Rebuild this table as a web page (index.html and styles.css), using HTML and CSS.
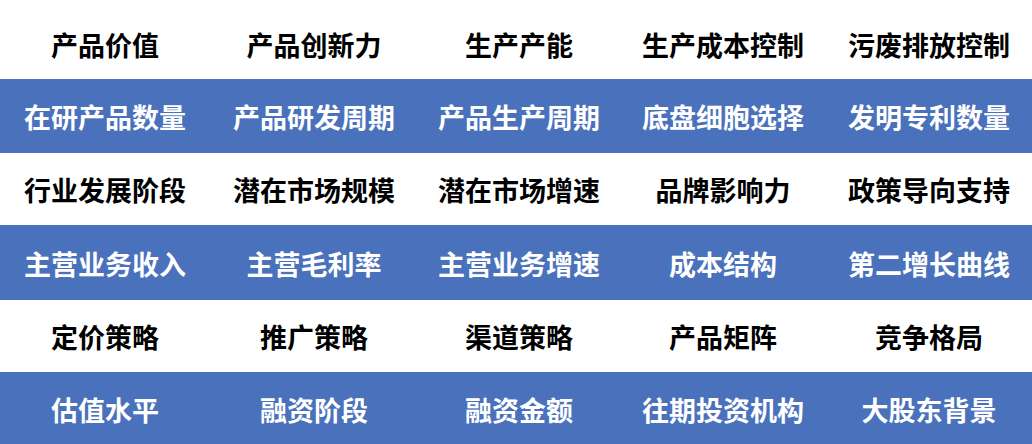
FILE: index.html
```html
<!DOCTYPE html>
<html lang="zh-CN">
<head>
<meta charset="utf-8">
<title>指标矩阵</title>
<link rel="stylesheet" href="styles.css">
</head>
<body>
<div class="matrix">
  <div class="row light r1">
    <div class="cell">产品价值</div>
    <div class="cell">产品创新力</div>
    <div class="cell">生产产能</div>
    <div class="cell">生产成本控制</div>
    <div class="cell">污废排放控制</div>
  </div>
  <div class="row dark r2">
    <div class="cell">在研产品数量</div>
    <div class="cell">产品研发周期</div>
    <div class="cell">产品生产周期</div>
    <div class="cell">底盘细胞选择</div>
    <div class="cell">发明专利数量</div>
  </div>
  <div class="row light r3">
    <div class="cell">行业发展阶段</div>
    <div class="cell">潜在市场规模</div>
    <div class="cell">潜在市场增速</div>
    <div class="cell">品牌影响力</div>
    <div class="cell">政策导向支持</div>
  </div>
  <div class="row dark r4">
    <div class="cell">主营业务收入</div>
    <div class="cell">主营毛利率</div>
    <div class="cell">主营业务增速</div>
    <div class="cell">成本结构</div>
    <div class="cell">第二增长曲线</div>
  </div>
  <div class="row light r5">
    <div class="cell">定价策略</div>
    <div class="cell">推广策略</div>
    <div class="cell">渠道策略</div>
    <div class="cell">产品矩阵</div>
    <div class="cell">竞争格局</div>
  </div>
  <div class="row dark r6">
    <div class="cell">估值水平</div>
    <div class="cell">融资阶段</div>
    <div class="cell">融资金额</div>
    <div class="cell">往期投资机构</div>
    <div class="cell">大股东背景</div>
  </div>
</div>
</body>
</html>
```

FILE: styles.css
```css
html, body {
  margin: 0;
  padding: 0;
  background: #ffffff;
}

.matrix {
  width: 1032px;
  display: flex;
  flex-direction: column;
  font-family: "Noto Sans CJK SC", "Noto Sans", sans-serif;
  font-weight: 700;
  font-size: 27px;
  line-height: 1;
}

.row {
  display: grid;
  grid-template-columns: 210px 208px 202px 206px 206px;
  box-sizing: border-box;
}

.cell {
  display: flex;
  align-items: center;
  justify-content: center;
  white-space: nowrap;
}

.light {
  background: #ffffff;
  color: #000000;
}

.dark {
  background: #4a71bc;
  color: #ffffff;
}

.r1 { height: 79px; padding-top: 9px; }
.r2 { height: 74px; }
.r3 { height: 72px; }
.r4 { height: 75px; padding-top: 2px; }
.r5 { height: 72px; }
.r6 { height: 72px; padding-top: 3px; }
```
